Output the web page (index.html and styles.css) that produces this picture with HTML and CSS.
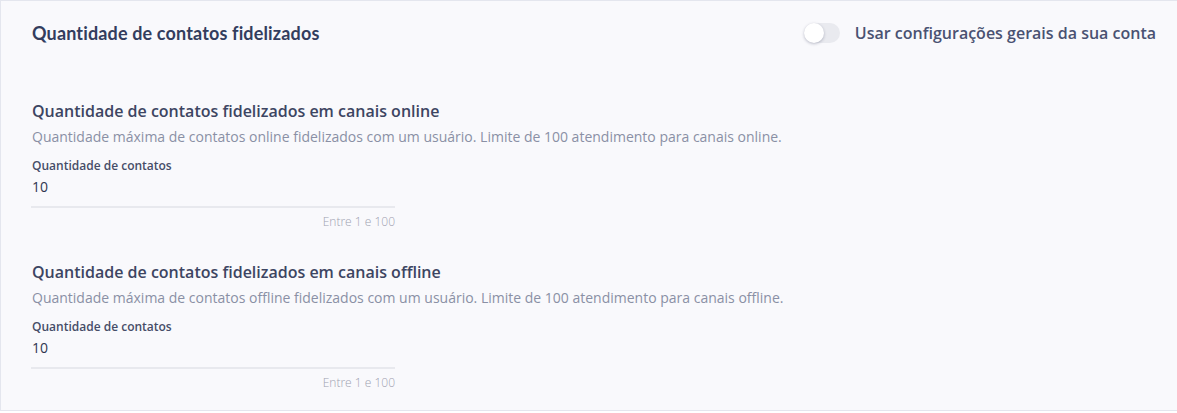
FILE: index.html
```html
<!DOCTYPE html>
<html lang="pt">
<head>
<meta charset="utf-8">
<link rel="stylesheet" href="styles.css">
</head>
<body>
<div class="card">
  <div class="card-head">
    <h2 class="card-title">Quantidade de contatos fidelizados</h2>
    <label class="switch-row">
      <span class="switch"><span class="knob"></span></span>
      <span class="switch-label">Usar configurações gerais da sua conta</span>
    </label>
  </div>

  <section class="group">
    <h3 class="group-title">Quantidade de contatos fidelizados em canais online</h3>
    <p class="group-desc">Quantidade máxima de contatos online fidelizados com um usuário. Limite de 100 atendimento para canais online.</p>
    <div class="field">
      <div class="field-label">Quantidade de contatos</div>
      <div class="field-value">10</div>
      <div class="field-hint">Entre 1 e 100</div>
    </div>
  </section>

  <section class="group">
    <h3 class="group-title">Quantidade de contatos fidelizados em canais offline</h3>
    <p class="group-desc">Quantidade máxima de contatos offline fidelizados com um usuário. Limite de 100 atendimento para canais offline.</p>
    <div class="field">
      <div class="field-label">Quantidade de contatos</div>
      <div class="field-value">10</div>
      <div class="field-hint">Entre 1 e 100</div>
    </div>
  </section>
</div>
</body>
</html>
```
FILE: styles.css
```css
* { box-sizing: border-box; }
html, body {
  margin: 0;
  padding: 0;
  background: #ffffff;
}
body {
  font-family: "Open Sans", "Liberation Sans", sans-serif;
  color: #3b4463;
}
.card {
  width: 1190px;
  height: 411px;
  background: #f9f9fc;
  border-top: 1px solid #e4e6ee;
  border-left: 1px solid #e4e6ee;
  border-bottom: 1px solid #e4e6ee;
  padding: 0 0 0 30px;
}
.card-head {
  display: flex;
  align-items: center;
  justify-content: space-between;
  width: 1125px;
  height: 64px;
  padding-left: 1px;
}
.card-title {
  margin: 0;
  font-family: "Lato", "Liberation Sans", sans-serif;
  font-weight: 700;
  font-size: 18px;
  color: #333d5e;
  letter-spacing: 0.15px;
}
.switch-row {
  display: flex;
  align-items: center;
  gap: 15px;
}
.switch {
  position: relative;
  width: 36px;
  height: 20px;
  border-radius: 10px;
  background: #e9eaef;
  display: block;
}
.knob {
  position: absolute;
  left: 0;
  top: 0;
  width: 20px;
  height: 20px;
  border-radius: 50%;
  background: #ffffff;
  box-shadow: 0 1px 3px rgba(40, 45, 80, 0.3);
}
.switch-label {
  font-size: 16px;
  font-weight: 600;
  color: #4a5272;
}
.group {
  padding-top: 35px;
  padding-left: 1px;
}
.group + .group {
  padding-top: 31px;
}
.group-title {
  margin: 0;
  font-size: 16px;
  font-weight: 600;
  line-height: 22px;
  color: #3d4562;
}
.group-desc {
  margin: 5px 0 0;
  font-size: 14px;
  line-height: 20px;
  color: #8a90a5;
}
.field {
  width: 364px;
  margin-top: 11px;
  margin-left: -1px;
}
.field-label {
  font-size: 12px;
  font-weight: 600;
  line-height: 16px;
  padding-left: 1px;
  color: #464d68;
}
.field-value {
  font-size: 14px;
  line-height: 18px;
  padding: 4px 0 10px 1px;
  color: #2f3650;
  border-bottom: 2px solid #e8e9ee;
}
.field-hint {
  text-align: right;
  font-size: 12px;
  font-weight: 300;
  line-height: 16px;
  margin-top: 6px;
  color: #9ea2b1;
}
```
